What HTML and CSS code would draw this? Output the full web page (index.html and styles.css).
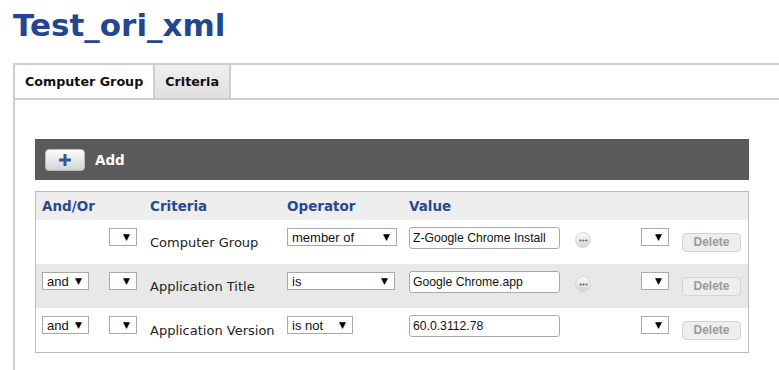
FILE: index.html
```html
<!DOCTYPE html>
<html lang="en">
<head>
    <meta charset="UTF-8">
    <title>Test_ori_xml</title>
    <link rel="stylesheet" href="styles.css">
</head>
<body>
<h1 class="title">Test_ori_xml</h1>
<div class="panel">
    <ul class="tabs">
        <li class="tab active">Computer Group</li>
        <li class="tab">Criteria</li>
    </ul>
    <div class="content">
        <div class="toolbar">
            <span class="add-btn">
                <svg width="16" height="16" viewBox="0 0 16 16"><path d="M8 2v12M2 8h12" stroke="#2a5a9e" stroke-width="3"/></svg>
            </span>
            <span class="add-label">Add</span>
        </div>
        <div class="criteria">
            <div class="row head">
                <span>And/Or</span>
                <span></span>
                <span>Criteria</span>
                <span>Operator</span>
                <span>Value</span>
            </div>
            <div class="row">
                <span></span>
                <span class="select w28"><span></span><i>▼</i></span>
                <span class="name">Computer Group</span>
                <span class="select w110"><span>member of</span><i>▼</i></span>
                <span class="input">Z-Google Chrome Install</span>
                <span class="more"><svg width="9" height="3" viewBox="0 0 9 3"><circle cx="1.5" cy="1.5" r="1.1"/><circle cx="4.5" cy="1.5" r="1.1"/><circle cx="7.5" cy="1.5" r="1.1"/></svg></span>
                <span class="select w28"><span></span><i>▼</i></span>
                <span class="delete">Delete</span>
            </div>
            <div class="row alt">
                <span class="select w47"><span>and</span><i>▼</i></span>
                <span class="select w28"><span></span><i>▼</i></span>
                <span class="name">Application Title</span>
                <span class="select w108"><span>is</span><i>▼</i></span>
                <span class="input">Google Chrome.app</span>
                <span class="more"><svg width="9" height="3" viewBox="0 0 9 3"><circle cx="1.5" cy="1.5" r="1.1"/><circle cx="4.5" cy="1.5" r="1.1"/><circle cx="7.5" cy="1.5" r="1.1"/></svg></span>
                <span class="select w28"><span></span><i>▼</i></span>
                <span class="delete">Delete</span>
            </div>
            <div class="row">
                <span class="select w47"><span>and</span><i>▼</i></span>
                <span class="select w28"><span></span><i>▼</i></span>
                <span class="name">Application Version</span>
                <span class="select w66"><span>is not</span><i>▼</i></span>
                <span class="input">60.0.3112.78</span>
                <span></span>
                <span class="select w28"><span></span><i>▼</i></span>
                <span class="delete">Delete</span>
            </div>
        </div>
    </div>
</div>
</body>
</html>
```

FILE: styles.css
```css
*{
    margin: 0;
    padding: 0;
    box-sizing: border-box;
}
ul{
    list-style: none;
}
body{
    width: 779px;
    height: 370px;
    overflow: hidden;
    background: #fff;
    font-family: "DejaVu Sans", Verdana, sans-serif;
    padding-left: 13px;
}
.title{
    color: #24468c;
    font-size: 31px;
    line-height: 36px;
    padding-top: 7px;
    height: 63px;
}
.panel{
    width: 766px;
    height: 307px;
    overflow: hidden;
    border-top: 2px solid #cdcdcd;
    border-left: 2px solid #cdcdcd;
}
.panel .tabs{
    display: flex;
    height: 35px;
    border-bottom: 2px solid #cdcdcd;
}
.panel .tab{
    font-size: 12.7px;
    font-weight: bold;
    color: #111;
    line-height: 33px;
    padding: 0 10px 0 10px;
    border-right: 2px solid #cdcdcd;
    background: linear-gradient(#f0f0f0, #dedede);
}
.panel .tab.active{
    background: #fff;
}
.content{
    padding: 39px 0 0 20px;
}
.toolbar{
    width: 714px;
    height: 41px;
    background: #5a5a5a;
    display: flex;
    align-items: center;
    padding-left: 10px;
}
.add-btn{
    width: 40px;
    height: 22px;
    border-radius: 4px;
    background: linear-gradient(#fdfdfd, #d4d4d4);
    border: 1px solid #bdbdbd;
    display: flex;
    align-items: center;
    justify-content: center;
}
.add-label{
    color: #fff;
    font-weight: bold;
    font-size: 13.5px;
    margin-left: 10px;
}
.criteria{
    width: 714px;
    margin-top: 11px;
    border: 1px solid #bcbcbc;
}
.criteria .row{
    display: grid;
    grid-template-columns: 67px 41px 137px 122px 163px 69px 41px 1fr;
    align-items: start;
    height: 44px;
    padding-left: 6px;
    font-size: 13px;
}
.criteria .row.alt{
    background: #e8e8e8;
}
.criteria .row.head{
    height: 28px;
    background: #eee;
    color: #29498c;
    font-weight: bold;
    font-size: 13.5px;
    line-height: 29px;
}
.select{
    display: flex;
    justify-content: space-between;
    align-items: center;
    height: 18px;
    margin-top: 8px;
    padding: 0 6px 0 4px;
    background: #fff;
    border: 1px solid #a9a9a9;
    font-family: "Liberation Sans", Arial, sans-serif;
    font-size: 13px;
    color: #111;
}
.select i{
    font-family: "DejaVu Sans", sans-serif;
    font-style: normal;
    font-size: 9px;
    color: #000;
}
.w28{ width: 28px; }
.w47{ width: 47px; }
.w66{ width: 66px; }
.w108{ width: 108px; }
.w110{ width: 110px; }
.name{
    margin-top: 15px;
    color: #222;
    font-size: 13px;
}
.input{
    width: 151px;
    height: 22px;
    margin-top: 7px;
    border: 1px solid #a9a9a9;
    border-radius: 3px;
    background: #fff;
    font-family: "Liberation Sans", Arial, sans-serif;
    font-size: 12.2px;
    line-height: 20px;
    padding-left: 3px;
    color: #111;
}
.more{
    width: 16px;
    height: 16px;
    margin: 12px 0 0 3px;
    border-radius: 50%;
    background: linear-gradient(#fcfcfc, #d4d4d4);
    border: 1px solid #d6d6d6;
    display: flex;
    align-items: center;
    justify-content: center;
    fill: #666;
}
.delete{
    width: 59px;
    height: 19px;
    margin-top: 13px;
    border: 1px solid #d3d3d3;
    border-radius: 4px;
    background: #eee;
    color: #9a9a9a;
    font-family: "Liberation Sans", Arial, sans-serif;
    font-size: 12px;
    font-weight: bold;
    line-height: 17px;
    text-align: center;
}
```
